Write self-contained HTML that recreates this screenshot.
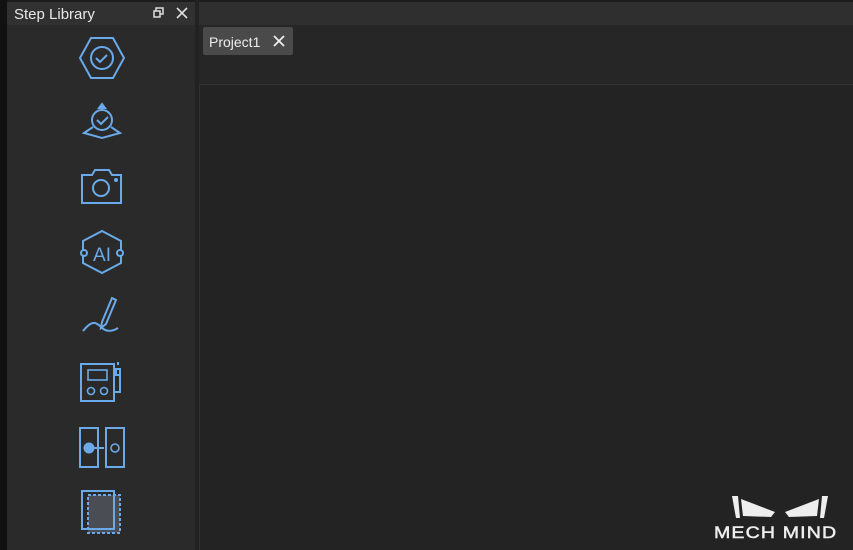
<!DOCTYPE html>
<html><head><style>
body{margin:0;width:853px;height:550px;background:#1c1c1c;overflow:hidden;position:relative;font-family:"Liberation Sans",sans-serif}
div{position:absolute;box-sizing:border-box}
svg{position:absolute}
</style></head><body>
<div style="left:0;top:0;width:7px;height:550px;background:#111"></div>
<div style="left:7px;top:2px;width:188px;height:23px;background:#313131"></div>
<div style="left:14px;top:6px;color:#e8e8e8;font-size:15px">Step Library</div>
<svg style="left:152px;top:7px" width="14" height="12" viewBox="0 0 14 12"><rect x="4" y="1" width="7" height="6" fill="none" stroke="#ddd" stroke-width="1.5"/><rect x="2" y="4" width="6" height="6" fill="#313131" stroke="#ddd" stroke-width="1.5"/></svg>
<svg style="left:176px;top:7px" width="12" height="12"><path d="M1 1L11 11M11 1L1 11" stroke="#ddd" stroke-width="1.6"/></svg>
<div style="left:7px;top:25px;width:188px;height:525px;background:#2a2a2a"></div>
<div style="left:195px;top:0;width:4px;height:550px;background:#222"></div>
<div style="left:199px;top:2px;width:654px;height:23px;background:#2f2f2f"></div>
<div style="left:199px;top:25px;width:654px;height:60px;background:#262626"></div>
<div style="left:203px;top:27px;width:90px;height:28px;background:#4a4a4a;border-radius:2px"></div>
<div style="left:209px;top:34px;color:#eee;font-size:14px">Project1</div>
<svg style="left:273px;top:35px" width="12" height="12"><path d="M1 1L11 11M11 1L1 11" stroke="#eee" stroke-width="1.8"/></svg>
<div style="left:199px;top:84px;width:654px;height:466px;background:#232323;border-top:1px solid #333;border-left:1px solid #303030"></div>

<svg style="left:0;top:0" width="200" height="550" fill="none" stroke="#6aaaea" stroke-width="2">
<path d="M91 38h22l11 20-11 20H91L80 58z"/><circle cx="102" cy="58" r="11"/><path d="M96 58l4 4 7-7"/>
<circle cx="102" cy="120" r="10"/><path d="M97 120l4 4 7-7"/><path d="M93 127l-9 6 18 5 18-5-9-6"/><path d="M99 108l3-4 3 4z" fill="#6aaaea"/>
<path d="M82 175h10l3-5h14l3 5h9v28H82z"/><circle cx="101" cy="188" r="8"/><circle cx="116" cy="180" r="1" fill="#6aaaea"/>
<path d="M102 231l19 10v22l-19 10-19-10V241z"/><circle cx="84" cy="253" r="3" fill="#2a2a2a"/><circle cx="120" cy="253" r="3" fill="#2a2a2a"/>
<path d="M83 331c8-10 12-10 18-4s12 4 17 1"/><path d="M112 298l-10 24-1 6 5-4 10-24z"/>
<rect x="81" y="364" width="33" height="37"/><rect x="88" y="370" width="19" height="10" stroke-width="1.6"/><circle cx="91" cy="391" r="3.5" stroke-width="1.6"/><circle cx="104" cy="391" r="3.5" stroke-width="1.6"/><path d="M114 392h6v-17M118 365v-3M116 369h4v6h-4z"/>
<rect x="80" y="428" width="18" height="39"/><rect x="106" y="428" width="18" height="39"/><circle cx="89" cy="448" r="4.5" fill="#6aaaea"/><circle cx="115" cy="448" r="4" stroke-width="1.6"/><path d="M94 448h10"/>
<rect x="88" y="495" width="32" height="38" fill="#4a4d54" stroke-dasharray="3 2"/><rect x="82" y="491" width="32" height="38"/>
</svg>
<svg style="left:80px;top:236px" width="45" height="36"><text x="22" y="25" text-anchor="middle" fill="#6aaaea" font-family="Liberation Sans" font-size="19">AI</text></svg>

<svg style="left:730px;top:495px" width="100" height="30" fill="#eee"><path d="M2 1h6l2 22H6z"/><path d="M11 4l34 13-4 5-28-1z"/><path d="M98 1h-6l-2 22h4z"/><path d="M89 4l-34 13 4 5 28-1z"/></svg>
<div style="left:714px;top:523px;color:#eee;font-size:17px;letter-spacing:1px;transform:scaleX(1.15);transform-origin:left;-webkit-text-stroke:0.5px #eee">MECH MIND</div>
</body></html>
